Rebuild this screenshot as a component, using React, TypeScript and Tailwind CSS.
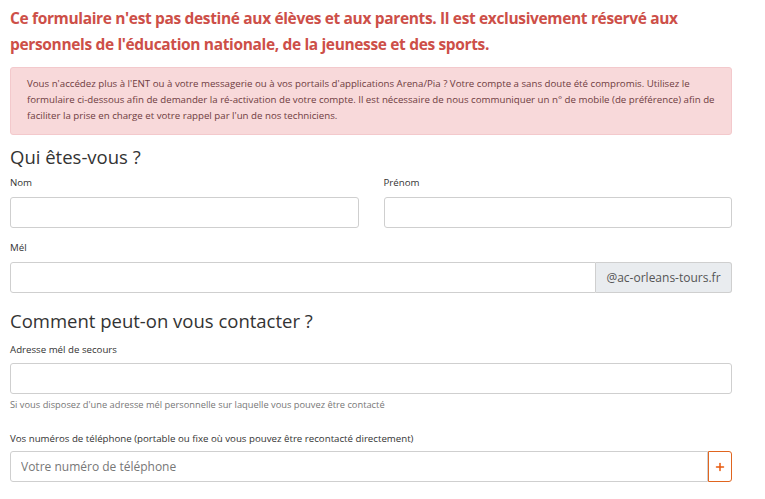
import { Plus } from "lucide-react";

const font = { fontFamily: '"Open Sans", "Noto Sans", sans-serif' };

function Label({ children, className = "mb-[7px]" }: { children: React.ReactNode; className?: string }) {
  return <label className={`block text-[9.7px] leading-[14px] text-[#333] ${className}`}>{children}</label>;
}

function Input({ placeholder }: { placeholder?: string }) {
  return (
    <input
      placeholder={placeholder}
      className="block w-full h-[31px] rounded-[3px] border border-[#cfcfcf] bg-white px-[10px] text-[12px] text-[#333] placeholder:text-[#777] outline-none"
    />
  );
}

export default function App() {
  return (
    <div style={font} className="min-h-screen bg-white text-[#333]">
      <div className="w-[722px] ml-[10px] pt-[5px]">
        {/* Warning title */}
        <h2 className="text-[15.5px] leading-[26px] font-bold tracking-[-0.35px] text-[#cd4f48]">
          Ce formulaire n'est pas destiné aux élèves et aux parents. Il est exclusivement réservé aux
          <br />
          personnels de l'éducation nationale, de la jeunesse et des sports.
        </h2>

        {/* Alert */}
        <div className="mt-[10px] rounded-[3px] border border-[#f3c9cc] bg-[#f8d9da] px-[16px] pt-[8px] pb-[10px] text-[9.7px] leading-[16px] text-[#6f3c3f]">
          Vous n'accédez plus à l'ENT ou à votre messagerie ou à vos portails d'applications Arena/Pia ? Votre compte a
          sans doute été compromis. Utilisez le formulaire ci-dessous afin de demander la ré-activation de votre compte.
          Il est nécessaire de nous communiquer un n° de mobile (de préférence) afin de faciliter la prise en charge et
          votre rappel par l'un de nos techniciens.
        </div>

        {/* Qui êtes-vous */}
        <h3 className="mt-[9px] text-[18.5px] leading-[26px] text-[#333]">Qui êtes-vous ?</h3>
        <div className="mt-[6px] grid grid-cols-2 gap-[25px]">
          <div>
            <Label>Nom</Label>
            <Input />
          </div>
          <div>
            <Label>Prénom</Label>
            <Input />
          </div>
        </div>

        <div className="mt-[13px]">
          <Label>Mél</Label>
          <div className="flex h-[31px]">
            <input className="flex-1 min-w-0 h-full rounded-l-[3px] border border-[#cfcfcf] bg-white px-[10px] text-[12px] outline-none" />
            <span className="flex items-center h-full w-[136px] justify-center rounded-r-[3px] border border-l-0 border-[#cfcfcf] bg-[#e9ecef] text-[12px] text-[#555]">
              @ac-orleans-tours.fr
            </span>
          </div>
        </div>

        {/* Contact */}
        <h3 className="mt-[15px] text-[18.5px] leading-[26px] text-[#333]">Comment peut-on vous contacter ?</h3>
        <div className="mt-[9px]">
          <Label className="mb-[6px]">Adresse mél de secours</Label>
          <Input />
          <p className="mt-[4px] text-[9.3px] leading-[13px] text-[#777]">
            Si vous disposez d'une adresse mél personnelle sur laquelle vous pouvez être contacté
          </p>
        </div>

        <div className="mt-[21px]">
          <Label className="mb-[5px]">
            Vos numéros de téléphone (portable ou fixe où vous pouvez être recontacté directement)
          </Label>
          <div className="flex h-[31px]">
            <input
              placeholder="Votre numéro de téléphone"
              className="flex-1 min-w-0 h-full rounded-l-[3px] border border-[#cfcfcf] bg-white px-[10px] text-[12px] placeholder:text-[#777] outline-none"
            />
            <button className="flex items-center justify-center w-[24px] h-full rounded-r-[3px] border border-[#e0651f] bg-white text-[#e8590c]">
              <Plus size={12} strokeWidth={3} />
            </button>
          </div>
        </div>
      </div>
    </div>
  );
}
